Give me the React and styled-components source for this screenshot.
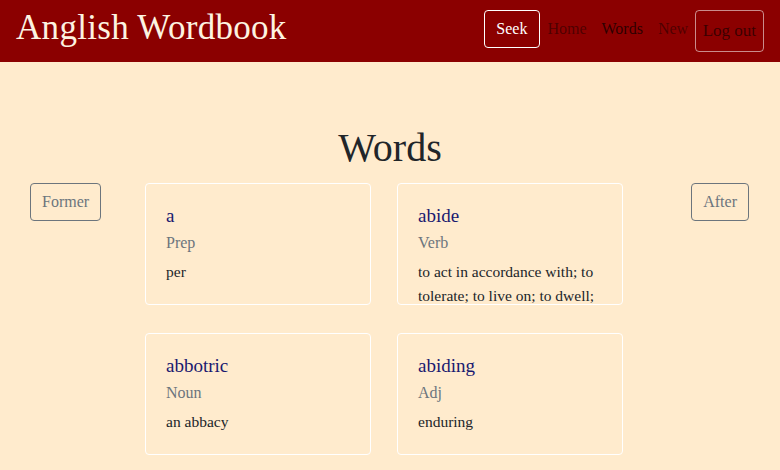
import styled, { createGlobalStyle } from "styled-components";

const GlobalStyle = createGlobalStyle`
  html, body {
    margin: 0;
    padding: 0;
    background-color: #ffebcd;
    font-family: "Liberation Serif", "DejaVu Serif", serif;
  }
`

const Header = styled.header`
  height: 62px;
  background-color: #8b0000;
  display: flex;
  align-items: center;
  justify-content: space-between;
  padding: 0 16px;
  box-sizing: border-box;
`

const Brand = styled.div`
  color: #fdf3e1;
  font-size: 35px;
  letter-spacing: 0.3px;
  margin-top: -6px;
`

const Nav = styled.nav`
  display: flex;
  align-items: center;
`

const SeekButton = styled.button`
  font-family: inherit;
  font-size: 16px;
  color: #fff;
  background: transparent;
  border: 1px solid #fff;
  border-radius: 4px;
  height: 38px;
  padding: 0 11.5px;
  margin-top: -5px;
`

const NavLink = styled.a`
  font-size: 16px;
  padding: 0 7.5px;
  color: ${props => props.active ? "rgba(0,0,0,0.7)" : "rgba(0,0,0,0.45)"};
  margin-top: -4px;
`

const LogoutButton = styled.button`
  font-family: inherit;
  font-size: 17px;
  color: rgba(0,0,0,0.6);
  background: transparent;
  border: 1px solid rgba(255,255,255,0.55);
  border-radius: 4px;
  height: 42px;
  padding: 0 7px;
  margin-left: -1px;
`

const Title = styled.h1`
  margin: 62px 0 0;
  text-align: center;
  font-weight: normal;
  font-size: 40px;
  line-height: 48px;
  color: #212529;
`

const Main = styled.div`
  display: grid;
  grid-template-columns: 145px 478px 1fr;
  margin-top: 11px;
`

const SideLeft = styled.div`
  padding-left: 30px;
`

const SideRight = styled.div`
  display: flex;
  justify-content: flex-end;
  padding-right: 31px;
`

const PageButton = styled.button`
  font-family: inherit;
  font-size: 16px;
  color: #6c757d;
  background: transparent;
  border: 1px solid #6c757d;
  border-radius: 4px;
  height: 38px;
  padding: 0 11px;
`

const Cards = styled.div`
  display: grid;
  grid-template-columns: 226px 226px;
  column-gap: 26px;
  row-gap: 28px;
`

const Card = styled.div`
  height: 122px;
  box-sizing: border-box;
  border: 1px solid #fff;
  border-radius: 4px;
  padding: 20px 20px 0;
  overflow: hidden;
`

const Word = styled.div`
  color: #191970;
  font-size: 19px;
  line-height: 24px;
`

const Kind = styled.div`
  color: #6c757d;
  font-size: 16px;
  line-height: 24px;
  margin-top: 3px;
`

const Meaning = styled.div`
  color: #212529;
  font-size: 15.5px;
  line-height: 24px;
  margin-top: 5px;
`

const words = [
  { word: "a", kind: "Prep", meaning: "per" },
  { word: "abide", kind: "Verb", meaning: "to act in accordance with; to tolerate; to live on; to dwell; to remain" },
  { word: "abbotric", kind: "Noun", meaning: "an abbacy" },
  { word: "abiding", kind: "Adj", meaning: "enduring" },
]

function App () {
  return (
    <>
      <GlobalStyle />
      <Header>
        <Brand>Anglish Wordbook</Brand>
        <Nav>
          <SeekButton>Seek</SeekButton>
          <NavLink>Home</NavLink>
          <NavLink active>Words</NavLink>
          <NavLink>New</NavLink>
          <LogoutButton>Log out</LogoutButton>
        </Nav>
      </Header>
      <Title>Words</Title>
      <Main>
        <SideLeft>
          <PageButton>Former</PageButton>
        </SideLeft>
        <Cards>
          {words.map(w => (
            <Card key={w.word}>
              <Word>{w.word}</Word>
              <Kind>{w.kind}</Kind>
              <Meaning>{w.meaning}</Meaning>
            </Card>
          ))}
        </Cards>
        <SideRight>
          <div>
            <PageButton>After</PageButton>
          </div>
        </SideRight>
      </Main>
    </>
  )
}

export default App
